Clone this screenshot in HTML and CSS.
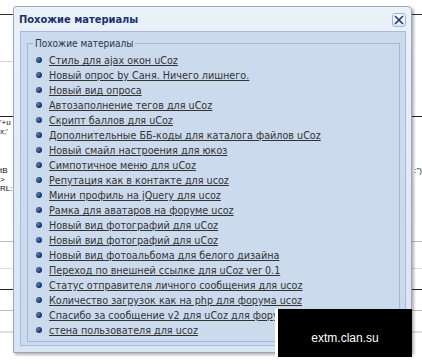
FILE: index.html
```html
<!DOCTYPE html>
<html lang="ru">
<head>
    <meta charset="UTF-8">
    <title>Похожие материалы</title>
    <link rel="stylesheet" href="styles.css">
</head>
<body>
    <!-- page underneath the popup -->
    <div class="page">
        <div class="bg-top"></div>
        <div class="bg-grey"></div>
        <div class="bg-dark"></div>
        <div class="bg-code">
            <div class="code-row"><span>'+u</span><span></span></div>
            <div class="code-row"><span>x;'</span><span></span></div>
        </div>
        <div class="bg-code bg-code-2">
            <div class="code-row"><span>tB</span><span>:")</span></div>
            <div class="code-row"><span>&gt;</span><span></span></div>
            <div class="code-row"><span>RL:</span><span></span></div>
        </div>
        <div class="bg-line-grey"></div>
        <div class="bg-line-light"></div>
        <div class="bg-line-dark"></div>
        <div class="bg-line-grey2"></div>
        <div class="bg-line-light2"></div>
    </div>

    <div class="dialog">
        <div class="dialog-head">
            <span class="dialog-title">Похожие материалы</span>
            <span class="dialog-close">
                <svg width="10" height="10" viewBox="0 0 10 10">
                    <path d="M1 1 L9 9 M9 1 L1 9" stroke="#24396a" stroke-width="1.6" fill="none"/>
                </svg>
            </span>
        </div>
        <div class="dialog-body">
            <fieldset class="related">
                <legend>Похожие материалы</legend>
                <ul class="related-list">
                    <li><a href="#">Стиль для ajax окон uCoz</a></li>
                    <li><a href="#">Новый опрос by Саня. Ничего лишнего.</a></li>
                    <li><a href="#">Новый вид опроса</a></li>
                    <li><a href="#">Автозаполнение тегов для uCoz</a></li>
                    <li><a href="#">Скрипт баллов для uCoz</a></li>
                    <li><a href="#">Дополнительные ББ-коды для каталога файлов uCoz</a></li>
                    <li><a href="#">Новый смайл настроения для юкоз</a></li>
                    <li><a href="#">Симпотичное меню для uCoz</a></li>
                    <li><a href="#">Репутация как в контакте для ucoz</a></li>
                    <li><a href="#">Мини профиль на jQuery для ucoz</a></li>
                    <li><a href="#">Рамка для аватаров на форуме ucoz</a></li>
                    <li><a href="#">Новый вид фотографий для uCoz</a></li>
                    <li><a href="#">Новый вид фотографий для uCoz</a></li>
                    <li><a href="#">Новый вид фотоальбома для белого дизайна</a></li>
                    <li><a href="#">Переход по внешней ссылке для uCoz ver 0.1</a></li>
                    <li><a href="#">Статус отправителя личного сообщения для ucoz</a></li>
                    <li><a href="#">Количество загрузок как на php для форума ucoz</a></li>
                    <li><a href="#">Спасибо за сообщение v2 для uCoz для форума</a></li>
                    <li><a href="#">стена пользователя для ucoz</a></li>
                </ul>
            </fieldset>
        </div>
    </div>

    <div class="watermark">extm.clan.su</div>
</body>
</html>
```

FILE: styles.css
```css
body {
    margin: 0;
    padding: 0;
    background-color: #fff;
    font-family: 'DejaVu Sans Condensed', 'Liberation Sans', sans-serif;
    color: #333;
}

/* background page */

.page {
    height: 364px;
    overflow: hidden;
}

.bg-top {
    height: 14px;
    border-bottom: 1px solid #333;
}

.bg-grey {
    width: 60px;
    height: 46px;
    border-bottom: 1px solid #d4d4d4;
}

.bg-dark {
    height: 54px;
    border-bottom: 1px solid #222;
}

.bg-code {
    padding-top: 1px;
    font-family: 'Liberation Sans', sans-serif;
    font-size: 8px;
    line-height: 9px;
    color: #111;
}

.bg-code-2 {
    padding-top: 30px;
    line-height: 9px;
}

.code-row {
    display: flex;
    justify-content: space-between;
}

.bg-line-grey {
    margin-top: 48px;
    border-bottom: 1px solid #bbb;
}

.bg-line-light {
    margin-top: 26px;
    border-bottom: 1px solid #ddd;
}

.bg-line-dark {
    margin-top: 20px;
    border-bottom: 1px solid #222;
}

.bg-line-grey2 {
    margin-top: 20px;
    border-bottom: 1px solid #bbb;
}

.bg-line-light2 {
    margin-top: 20px;
    border-bottom: 2px solid #ddd;
}

/* popup window */

.dialog {
    position: absolute;
    left: 13px;
    top: 6px;
    width: 399px;
    box-sizing: border-box;
    padding: 0 5px 6px 6px;
    border: 1px solid #9aa6bb;
    border-radius: 3px 4px 0 0;
    background: linear-gradient(#ebf1f9, #d8e3f3);
    box-shadow: 2px 2px 3px rgba(0, 0, 0, 0.3);
}

.dialog-head {
    height: 24px;
    display: flex;
    align-items: center;
    justify-content: space-between;
}

.dialog-title {
    margin-left: -1px;
    font-size: 11px;
    font-weight: bold;
    color: #1b336a;
}

.dialog-close {
    width: 12px;
    height: 12px;
    margin-top: 1px;
    display: flex;
    align-items: center;
    justify-content: center;
    border: 1px solid #a3b4d4;
    border-radius: 3px;
    background: linear-gradient(#f6f9fd, #dfe8f5);
}

.dialog-body {
    padding: 5px 5px 3px 6px;
    border: 1px solid #a7badf;
    background-color: #ccdaee;
}

.related {
    margin: 0;
    padding: 3px 0 3px 0;
    border: 1px solid #a4b7dc;
}

.related legend {
    margin-left: 5px;
    padding: 0 2px;
    font-size: 10px;
    line-height: 13px;
    color: #2a3550;
}

.related-list {
    list-style: none;
    margin: 0;
    padding: 0;
}

.related-list li {
    position: relative;
    padding-left: 21px;
    height: 15px;
    font-size: 10.7px;
    line-height: 15px;
    white-space: nowrap;
}

.related-list li::before {
    content: "";
    position: absolute;
    left: 8px;
    top: 4px;
    width: 6px;
    height: 6px;
    border-radius: 50%;
    background: radial-gradient(circle at 35% 35%, #5d7fb6, #14306a 65%);
}

.related-list a {
    color: #333;
    text-decoration: underline;
}

/* watermark over the screenshot */

.watermark {
    position: absolute;
    left: 275px;
    top: 309px;
    width: 137px;
    height: 48px;
    box-sizing: border-box;
    padding-top: 22px;
    border-left: 3px solid #fff;
    background-color: #000;
    color: #fff;
    font-family: 'Liberation Sans', sans-serif;
    font-size: 12px;
    text-align: center;
}
```
